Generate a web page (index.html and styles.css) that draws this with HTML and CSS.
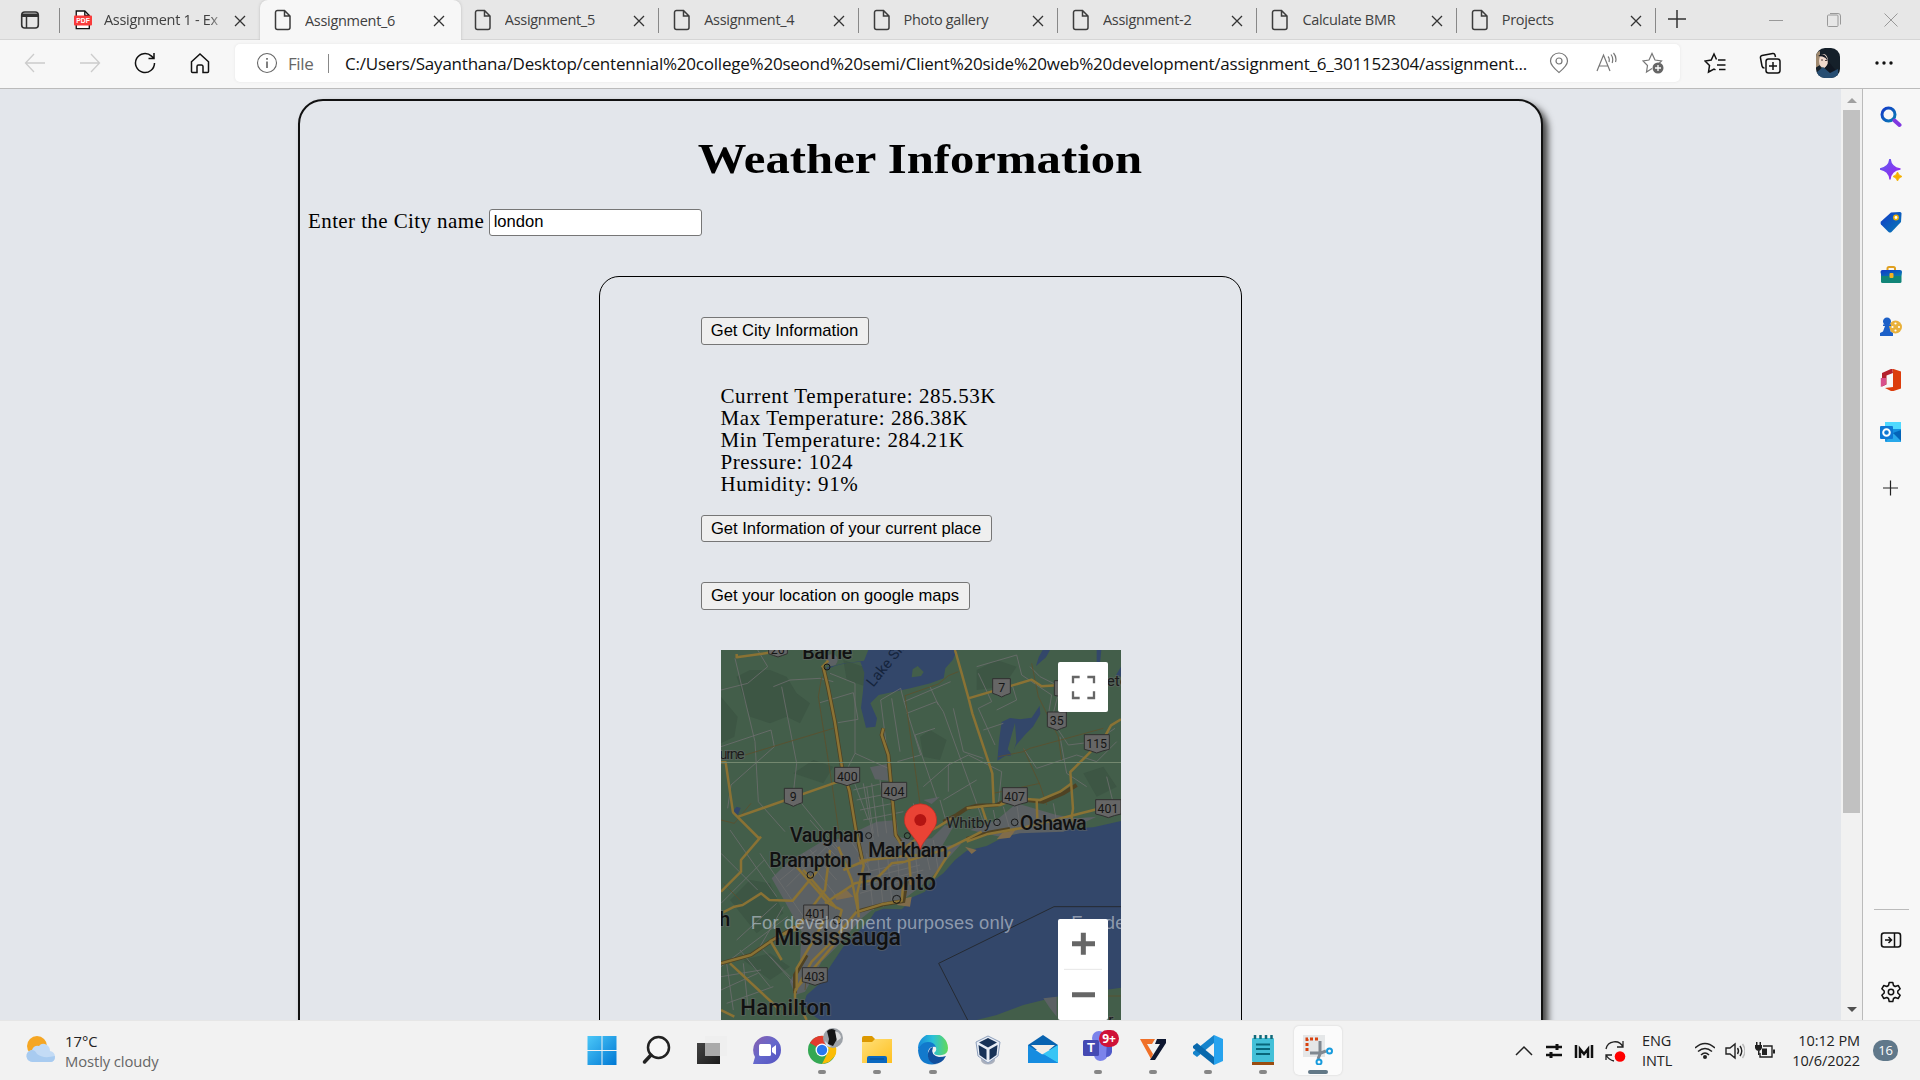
FILE: index.html
```html
<!DOCTYPE html>
<html lang="en">
<head>
<meta charset="utf-8">
<title>Assignment_6</title>
<link rel="stylesheet" href="styles.css">
</head>
<body>
<svg width="0" height="0" class="defs">
  <defs>
    <symbol id="doc" viewBox="0 0 18 22"><path d="M3.500 1.500H10.500L16 7V18.500a2 2 0 0 1-2 2H3.500a2 2 0 0 1-2-2V3.500a2 2 0 0 1 2-2zM10.500 1.500V7H16" fill="none" stroke="#3c3c3c" stroke-width="1.500"/></symbol>
    <symbol id="x" viewBox="0 0 12 12"><path d="M1 1l10 10M11 1L1 11" fill="none" stroke="#333" stroke-width="1.300"/></symbol>
    <linearGradient id="win" x2="1" y2="1"><stop stop-color="#4cc8f8"/><stop offset="1" stop-color="#0078d4"/></linearGradient>
    <linearGradient id="blu" x2="1" y2="1"><stop stop-color="#1238c8"/><stop offset="1" stop-color="#087eb4"/></linearGradient>
    <linearGradient id="pur" x2="1" y2="1"><stop stop-color="#5b5fef"/><stop offset="1" stop-color="#a020f0"/></linearGradient>
    <linearGradient id="edge" x2="1"><stop stop-color="#1689dc"/><stop offset=".5" stop-color="#2bc1d8"/><stop offset="1" stop-color="#62d957"/></linearGradient>
    <linearGradient id="fold" x2="1" y2="1"><stop stop-color="#ffe07a"/><stop offset="1" stop-color="#ffc020"/></linearGradient>
    <linearGradient id="chat" x2="1" y2="1"><stop stop-color="#8b5fae"/><stop offset=".5" stop-color="#6468cc"/><stop offset="1" stop-color="#5552c0"/></linearGradient>
    <linearGradient id="dark" x2="1" y2="1"><stop stop-color="#444"/><stop offset="1" stop-color="#1c1c1c"/></linearGradient>
  </defs>
</svg>

<header class="tabs">
  <div class="workspace"><svg width="20" height="20" viewBox="0 0 20 20"><rect x="1.700" y="2" width="16.600" height="16" rx="3" fill="none" stroke="#333" stroke-width="1.600"/><path d="M2 3.500h16V7H2z" fill="#333"/><path d="M6.500 6v12" stroke="#333" stroke-width="1.500"/></svg></div>
  <div class="tab before-active">
    <svg class="fav pdf" viewBox="0 0 20 22"><path d="M2.500 1h9.500l5 5v14.500H2.500z" fill="#fff" stroke="#111" stroke-width="1.500"/><path d="M12 1v5h5" fill="none" stroke="#111" stroke-width="1.500"/><rect y="6" width="20" height="11" rx="1" fill="#f93b3b"/><text x="10" y="14.500" text-anchor="middle" font-size="7.500" font-weight="bold" fill="#fff">PDF</text></svg>
    <span class="title fade">Assignment 1 - Ex</span><svg class="close"><use href="#x"/></svg></div>
  <div class="tab active"><svg class="fav"><use href="#doc"/></svg><span class="title">Assignment_6</span><svg class="close"><use href="#x"/></svg></div>
  <div class="tab"><svg class="fav"><use href="#doc"/></svg><span class="title">Assignment_5</span><svg class="close"><use href="#x"/></svg></div>
  <div class="tab"><svg class="fav"><use href="#doc"/></svg><span class="title">Assignment_4</span><svg class="close"><use href="#x"/></svg></div>
  <div class="tab"><svg class="fav"><use href="#doc"/></svg><span class="title">Photo gallery</span><svg class="close"><use href="#x"/></svg></div>
  <div class="tab"><svg class="fav"><use href="#doc"/></svg><span class="title">Assignment-2</span><svg class="close"><use href="#x"/></svg></div>
  <div class="tab"><svg class="fav"><use href="#doc"/></svg><span class="title">Calculate BMR</span><svg class="close"><use href="#x"/></svg></div>
  <div class="tab"><svg class="fav"><use href="#doc"/></svg><span class="title">Projects</span><svg class="close"><use href="#x"/></svg></div>
  <svg class="newtab" viewBox="0 0 18 18"><path d="M9 0v18M0 9h18" stroke="#333" stroke-width="1.500"/></svg>
  <div class="wincontrols">
    <svg viewBox="0 0 14 14"><path d="M0 7.500h14" stroke="#999"/></svg>
    <svg viewBox="0 0 14 14"><path d="M.5 3a1 1 0 0 1 1-1H10a1 1 0 0 1 1 1v9.500a1 1 0 0 1-1 1H1.500a1 1 0 0 1-1-1zM3 .5h8a2.500 2.500 0 0 1 2.500 2.500v8.500" fill="none" stroke="#999"/></svg>
    <svg viewBox="0 0 14 14"><path d="M.5.5l13 13M13.500.5l-13 13" stroke="#999"/></svg>
  </div>
</header>

<nav class="toolbar">
  <div class="navbtns">
    <svg viewBox="0 0 22 22"><path d="M21 11H2M10 2L1.500 11l8.500 9" fill="none" stroke="#ccc" stroke-width="1.300"/></svg>
    <svg viewBox="0 0 22 22"><path d="M1 11h19M12 2l8.500 9-8.500 9" fill="none" stroke="#ccc" stroke-width="1.300"/></svg>
    <svg viewBox="0 0 22 22"><path d="M20.500 11a9.500 9.500 0 1 1-3-6.900L20 6.500M20 1v5.500h-5.500" fill="none" stroke="#111" stroke-width="1.500"/></svg>
    <svg viewBox="0 0 22 22"><path d="M2.500 9.800L11 2l8.500 7.800v9.700a1 1 0 0 1-1 1H14v-6a1.500 1.500 0 0 0-1.500-1.500h-3A1.500 1.500 0 0 0 8 14.500v6H3.500a1 1 0 0 1-1-1z" fill="none" stroke="#111" stroke-width="1.500"/></svg>
  </div>
  <div class="address">
    <svg class="info" viewBox="0 0 22 22"><circle cx="11" cy="11" r="9.500" fill="none" stroke="#666" stroke-width="1.100"/><path d="M11 9.500V16M11 6v1.800" stroke="#555" stroke-width="1.500"/></svg>
    <span class="scheme">File</span><i class="bar"></i>
    <span class="url">C:/Users/Sayanthana/Desktop/centennial%20college%20seond%20semi/Client%20side%20web%20development/assignment_6_301152304/assignment...</span>
    <div class="addricons">
      <svg viewBox="0 0 22 22"><path d="M11 20.500C8 18 2.500 13.500 2.500 9a8.500 8 0 0 1 17 0c0 4.500-5.500 9-8.500 11.500z" fill="none" stroke="#777" stroke-width="1.200"/><circle cx="11" cy="9" r="3" fill="none" stroke="#777" stroke-width="1.200"/></svg>
      <svg viewBox="0 0 22 22"><path d="M2 19L8.500 3 15 19M4.200 14h8.600M13 4.500c1.500 1.500 1.500 3.500 1 5.500M16 2.500c2 2.500 2.200 5 1.200 8.500M18.500 1c2.500 3 3 6 2 9" fill="none" stroke="#777" stroke-width="1.200"/></svg>
      <svg viewBox="0 0 22 22"><path d="M10 16.500L4.500 20l1-6.500L1 9l6-1 3-6.500L13 8l6.500 1L17 11.500" fill="none" stroke="#777" stroke-width="1.200"/><circle cx="16" cy="16" r="5.500" fill="#666"/><path d="M16 13v6M13 16h6" stroke="#fff" stroke-width="1.300"/></svg>
    </div>
  </div>
  <div class="actions">
    <svg viewBox="0 0 22 22"><path d="M14 8h7.500M13 13h8.500M15 17.500h6.500M12.500 7.500L10 2 7.200 8 1 9l4.500 4.500-1 6.500 5.500-3 1.500.8" fill="none" stroke="#111" stroke-width="1.500"/></svg>
    <svg viewBox="0 0 22 22"><rect x="7" y="7" width="14" height="14" rx="2.500" fill="none" stroke="#111" stroke-width="1.500"/><path d="M14 10v8M10 14h8M16.500 5l-.5-2a2 2 0 0 0-2.300-1.500L3 3.500A2 2 0 0 0 1.500 6L3 14a2.500 2.500 0 0 0 2.500 2" fill="none" stroke="#111" stroke-width="1.500"/></svg>
    <svg class="avatar" viewBox="0 0 26 30"><clipPath id="av"><rect x="1" width="24" height="30" rx="9"/></clipPath><g clip-path="url(#av)"><rect width="26" height="30" fill="#15202a"/><path d="M0 5l5-2v14l-5 3z" fill="#a08a70"/><ellipse cx="8.500" cy="13" rx="4.500" ry="7" fill="#eed8cc"/><path d="M3 8q7-5 10 5l10 12-8 2-6-6 4-5q0-8-10-8z" fill="#101722"/><path d="M2 24l6-5 7 6 8-4v9H2z" fill="#264d72"/><path d="M6 12h2M10 12.500h2" stroke="#504040"/></g></svg>
    <svg viewBox="0 0 22 22"><g fill="#111"><circle cx="4" cy="11" r="1.700"/><circle cx="11" cy="11" r="1.700"/><circle cx="18" cy="11" r="1.700"/></g></svg>
  </div>
</nav>

<div class="middle">
  <main class="viewport">
    <section class="card">
      <h1>Weather Information</h1>
      <div class="field"><label for="city">Enter the City name</label><input id="city" value="london"></div>
      <div class="panel">
        <button class="b1">Get City Information</button>
        <div class="results">Current Temperature: 285.53K<br>Max Temperature: 286.38K<br>Min Temperature: 284.21K<br>Pressure: 1024<br>Humidity: 91%</div>
        <button class="b2">Get Information of your current place</button>
        <button class="b3">Get your location on google maps</button>
        <svg class="map" viewBox="33 30 1200 1110">
          <rect x="33" y="30" width="1200" height="1110" fill="#435e4a"/>
          <g fill="#3d5644">
            <path d="M80 110l40-20 60 0 50 20 30 50 40 30-30 60-40-20-50 20-60-20-20-60z"/><path d="M33 170l50 60-10 60-40 20zM400 60l60 20 10 60-60-20zM630 290l30-20 50 30-20 60-50-10z"/><path d="M800 90l60-30 60 20-40 60-80 10zM250 400l60-40 60 20-30 50z"/><path d="M60 780l60-60 60 10 40 90-80 60zM100 960l80-20 60 40-60 40zM1120 400l60-20 40 60-60 30z"/>
          </g>
          <g fill="#33476a">
            <path d="M352 82l50-12 60-8L475 30H742L728 60l-22 25-5 30-40 15-60 15-95 20-25 25 20 45-5 25-28 3-15-60 6-50 4-55-12-33-40 4-35 8-28 12z"/>
            <path d="M875 246l25-12 30 4 35-5 24-36 2 25-22 38-22 22-30 35-15 30h-15l-25 15 5-60z"/>
            <path d="M1020 30l-12 22-30 26 8-26 12-22zM1160 30h14l-4 40-10 25zM80 500l12 4-8 20-20-5zM1218 105l15-25v30z"/>
            <path d="M1233 543L1150 562 1060 568 940 576 880 592 830 618 770 632 735 660 700 700 660 730 645 755 600 775 595 790 575 808 520 806 495 815 480 838 450 870 400 920 360 980 330 1030 290 1065 280 1095 300 1120 330 1140H800L860 1125 940 1095 1040 1070 1233 1043Z"/>
          </g>
          <path d="M608 88l15-10 18 18-8 12-28 4zM915 248l-22 80 14 18 12-40z" fill="#435e4a"/>
          <g fill="#5c6164">
            <path d="M480 382l50-10 5 50-40-4zM500 545l60-5 5 50 40 10 60-5 40-40 25 5-35 60 60-10-90 100-40 35-40 30-30 10-50 10-50 40-60 70-60 60-50 90-30 10-15-40 30-60 5-90-50-90-40-70 50-50 100-60 60-10z"/><path d="M780 570l80-30 60-50 120 35 60 10 60-5-100 45-130 5-60 10zM640 480l50-10-25 22zM1000 1075l40-5v60l-20-25z"/><circle cx="365" cy="60" r="18"/>
          </g>
          <path d="M880 575l40-10-20 28-40 5zM765 620l35 10-15 12zM445 650l35 15-30 10zM560 795l25-20 20-5-5 30zM370 765l40-15 20 20-50 10z" fill="#806c4b"/>
          <g fill="none" stroke="#6c6e6e" stroke-width="2.500">
            <path d="M75 55l60 250 10 180 80 90M33 150l80-20 60-50-30-50M33 320l150-50 10 50-130 115-10 70M190 140l50-20 90-5 40 10M215 140l45 230-10 90 90 110 80 100M330 188l100-30 14 80-60 10M360 100l75 30 0 210-20 40 60 160M435 340l100 45M512 180l20 160M512 180l60-35 10 40 50 160-70 20M545 175l25 160M582 185l140-60M590 220l90-35 20 30 120 330M660 140l25 55M730 205l30 130 60 20M615 285l60-20M615 285l65 190M715 375l60-30 100 50-10 100M715 375v80M860 210l60-30-12-40M820 270l60-20M800 80l120-35 15 60 90 60-10 60 60 90 80-10 60-40M805 100l40 85-40 20 50 110M940 325l40 60 120-40 60 20 60-60M1050 290l20 110 60 40M960 80l30 30 60 30-20 80M1190 410l20 80 23-5M700 480l100-60M640 440l80-70"/>
            <path d="M430 450l90-20M440 480l100-20M450 510l100-20M460 540l120-25M470 440l20 140M485 430l20 160M460 430l30 170M510 420l20 160M610 490l20 80M640 500l20 70M690 480l20 70M33 640l110 110M60 570l140 200M33 790l130-130M80 900l120-110M33 980l200-150M150 640l130 190M180 950l80 90M90 930l90 110M33 1010l120-20M50 1090l140-50M50 970l20 140M100 970l15 140M33 1050l110-50M220 800l-70 120 90 90M300 540l80 90M400 570l80 120M330 600l60 60M1110 1060v80M1050 1070l40 60"/>
            <path d="M450 700l130-30M450 720l180-45M450 740l190-50M450 760l190-55M470 640l20 170M500 620l20 180M530 620l15 160M560 620l10 130M610 600l20 150M640 600l20 90M670 600l15 90M260 660l90 120M280 640l100 130M300 630l80 90M210 720l110-90M230 740l120-120M820 520l10 50M850 510l10 50M880 500l20 70M920 490l10 70M1030 490l10 55"/>
          </g>
          <g fill="none" stroke="#5d4f2c" stroke-width="2.500"><path d="M105 345l265-80M335 110l-10 60 45 290 20 140M745 95l-30 12-30 25-100 35 8 60 30 215 10 70M865 350l75-15 20-10 220-60M965 70l20 100 60 120 10 70M940 325l50 110 20 60M850 460l140-30M33 540l40 10 50-60M40 730l65 65M290 1000l-5 50M1130 1068h103"/></g>
          <g fill="none" stroke="#4f4223" stroke-width="12">
            <path d="M340 82l14 60 20 100 22 140 22 70 20 120 18 85M520 265l-5 20 20 60 22 240 15 20"/><path d="M33 970l90-25 65-45 70-40M700 545l40-20 30-20 30-8 60-2 40-20 100 10 60-25 40-25M770 597l70-20 60-10M440 815l80-22 60-10 10-60M255 1060v-55l35-60"/>
          </g>
          <g fill="none" stroke="#8a7234" stroke-width="7.500" stroke-linejoin="round">
            <path d="M340 82l14 60 20 100 22 140 22 70 20 120 23 105 -20 85 5 70M335 82l20-20M520 265l-5 20 20 60 22 240 40 70 6 80M80 42v10l105-15M735 30l20 70 22 80 10 40 60 180 4 90M775 175l130-38 60-18 30 20 70-5M1233 238l-30 18-22 40-80 80 -20 20 8 110-6 40M33 367h14l22 150 80 80M85 530l300-105M33 970l90-25 65-45 70-40M33 755l60-60 0-35 60-70M33 820l40-20 25-5 55-35 25 20 70 2 70-85 20-30M60 970l150 140M33 1110l40 20M180 900l35 60"/>
            <path d="M870 495l50-20 70 5 60-25 35-25M770 505l60-8 40-2 20-15M815 500l15 45M980 480l2 60M770 605l60-22 110-20 120-30 100-25M575 630l60-45 50-25 40-25M400 690l70-30 150-15M345 790l90-60 60-10 50-50 40-5 50-15 80-25 60-30 40-20M255 675l70 80 30 35 40 20-10 40M280 690l100 115M360 630l-15 120-90 120-50 20M385 620l40 100 20 95 70-22 60-10 5-50M440 815l-75 90-60 60-50 90v65M350 820l-30 65-60 100 0 65M255 1050l120-140M670 715l50-80M290 1140l-10-20"/>
          </g>
          <path d="M1233 800H1032L686 970 773 1140" fill="none" stroke="#252a32" stroke-width="3"/>
          <path d="M33 367.500H1233" stroke="#73886f" stroke-width="3"/>
          <g fill="none" stroke="#181818" stroke-width="3"><circle cx="351" cy="81" r="9"/><circle cx="476" cy="587" r="9"/><circle cx="592" cy="587" r="9"/><circle cx="861" cy="547" r="10"/><circle cx="914" cy="547" r="10"/><circle cx="301" cy="705" r="10"/><circle cx="560" cy="778" r="12"/><circle cx="382" cy="841" r="12"/></g>
          <g fill="#666" stroke="#303030" stroke-width="3">
            <path d="M176 18h56v23q-16 6-28 10-12-4-28-10zM848 116h53v44q-15 5-26 11-11-6-27-11zM1033 122h40v44q-20 8-40 0zM1012 216h57v44q-15 5-28 11-13-6-29-11zM1123 284h75v44q-20 4-38 11-18-7-37-11zM374 382h75v44q-20 4-38 11-18-7-37-11zM515 427h75v44q-20 4-38 11-18-7-37-11zM877 443h75v44q-20 4-38 11-18-7-37-11zM1157 479h76v43q-20 4-38 11-18-7-38-11zM223 445h54v43q-15 5-27 11-11-6-27-11zM281 795h74v42q-18 4-36 11-18-7-38-11zM277 983h75v42q-19 4-37 11-18-7-38-11z"/>
          </g>
          <g class="shield"><text x="203" y="42">26</text><text x="875" y="156">7</text><text x="1040" y="256">35</text><text x="1160" y="324">115</text><text x="412" y="422">400</text><text x="552" y="467">404</text><text x="914" y="483">407</text><text x="1194" y="519">401</text><text x="250" y="484">9</text><text x="317" y="833">401</text><text x="314" y="1022">403</text></g>
          <g class="place"><text x="277" y="56" textLength="150">Barrie</text><text x="240" y="606" textLength="222">Vaughan</text><text x="475" y="650" textLength="238">Markham</text><text x="178" y="681" textLength="247">Brampton</text><text x="930" y="569" textLength="200">Oshawa</text><text class="lg" x="442" y="750" textLength="236">Toronto</text><text class="lg" x="193" y="915" textLength="380">Mississauga</text><text class="md" x="91" y="1125" textLength="273">Hamilton</text><text x="28" y="857">h</text></g>
          <g class="small"><text x="708" y="564" textLength="136">Whitby</text><text x="28" y="357" textLength="76">urne</text><text x="1190" y="138">ete</text><text x="1195" y="1155">r</text><text class="lake" transform="translate(490 143) rotate(-51)">Lake Sim</text></g>
          <g class="dev"><text x="122" y="867" textLength="788">For development purposes only</text><text x="1084" y="867" textLength="788">For development purposes only</text></g>
          <path d="M631 629c-5-22-18-32-31-51-9-13-17-21-17-38a48 48 0 0 1 97 0c0 17-8 25-17 38-13 19-26 29-32 51z" fill="#ea4335" stroke="#b92c22" stroke-width="2"/><circle cx="631" cy="540" r="18" fill="#b31412"/>
          <rect x="1044" y="66" width="150" height="150" rx="6" fill="#fff"/>
          <path d="M1089 130v-19h20M1132 111h20v19M1152 154v20h-20M1109 174h-20v-20" fill="none" stroke="#666" stroke-width="7"/>
          <rect x="1044" y="837" width="150" height="303" rx="6" fill="#fff"/>
          <path d="M1086 911h69M1120 878v66M1086 1064h69" stroke="#666" stroke-width="15"/><path d="M1062 988h114" stroke="#e6e6e6" stroke-width="3"/>
        </svg>
      </div>
    </section>
  </main>
  <div class="scroll"><i class="up"></i><div class="thumb"></div><i class="down"></i></div>
  <aside class="side">
    <svg viewBox="0 0 22 22"><circle cx="8.500" cy="8.500" r="6.500" fill="none" stroke="url(#blu)" stroke-width="3"/><path d="M14.500 14.500l5 4.500" stroke="#8038e0" stroke-width="4" stroke-linecap="round"/></svg>
    <svg viewBox="0 0 22 22"><path d="M10 0q1 8.500 10 10-9 1.500-10 10Q9 11.500 0 10 9 8.500 10 0z" fill="url(#pur)" stroke="url(#pur)" stroke-width="1.500" stroke-linejoin="round"/><path d="M17.500 13q1 3.500 4.500 4.500-3.500 1-4.500 4.500-1-3.500-4.500-4.500 3.500-1 4.500-4.500z" fill="#f5b000" stroke="#f5b000" stroke-width=".8"/></svg>
    <svg viewBox="0 0 22 22"><path d="M11 1.500L20 1q1.500 0 1.500 1.500L21 11 11.500 21q-1.500 1-3 0L1 13.500q-1-1.500 0-3z" fill="url(#blu)"/><circle cx="16" cy="6.500" r="2.200" fill="#fff" stroke="#f0b000" stroke-width="1.500"/></svg>
    <svg viewBox="0 0 22 22"><path d="M7.500 7V4.500q0-1.500 1.500-1.500h4.500Q15 3 15 4.500V7" fill="none" stroke="#e0a020" stroke-width="2"/><rect x="1" y="7" width="20.500" height="12" rx="1.500" fill="#118578"/><path d="M.5 8q0-2 2-2H20q2 0 2 2l-1 4H1.500z" fill="url(#blu)"/><rect x="9.500" y="9" width="4" height="5" rx="1" fill="#f4b322"/></svg>
    <svg viewBox="0 0 22 22"><circle cx="15.500" cy="11" r="6.500" fill="#e9b13b"/><g fill="#fff"><circle cx="15.500" cy="7.500" r="1.100"/><circle cx="15.500" cy="14.500" r="1.100"/><circle cx="12.500" cy="11" r="1.100"/><circle cx="19" cy="11" r="1.100"/></g><path d="M0 20v-3l3-1.500L5 10H3V8.500h1.500a4 4 0 1 1 5 0H11V10H9l1.500 5.500L13 17v3z" fill="#1c60c8"/></svg>
    <svg viewBox="0 0 22 22"><path d="M12 -.5L21 2.500v17L12 22.500 5 19l8-1V4z" fill="#dc3d0c"/><path d="M12 -.5L2 4v13.500l4.500-2V6.500L13 4z" fill="#b3202c"/><path d="M.8 9v9l5.200-2.500V9z" fill="#d8508c"/></svg>
    <svg viewBox="0 0 22 22"><rect x="5" y="1" width="16" height="20" rx="1" fill="#1490df"/><path d="M5 1h16v7H5z" fill="#50d9ff"/><path d="M10 15l11-6v12H6z" fill="#28a8ea"/><path d="M13 12l8 8V9z" fill="#0364b8"/><rect y="5" width="13" height="13" rx="1" fill="#0f78d4"/><circle cx="6.500" cy="11.500" r="3.300" fill="none" stroke="#fff" stroke-width="2"/></svg>
    <svg class="add" viewBox="0 0 22 22"><path d="M10.500 3.500v15M3 11h15" stroke="#222" stroke-width="1.200"/></svg>
    <hr>
    <svg viewBox="0 0 22 22"><rect x="1.500" y="4" width="19" height="14" rx="2.500" fill="none" stroke="#111" stroke-width="1.600"/><path d="M14.500 4v14M5 11h6M8.500 8l3 3-3 3" fill="none" stroke="#111" stroke-width="1.500"/></svg>
    <svg viewBox="0 0 22 22"><path d="M9.200 1.500h3.600l.7 3 1.700 1 3-1 2 3.300-2.400 2.200v2l2.400 2.200-2 3.300-3-1-1.700 1-.7 3H9.200l-.7-3-1.700-1-3 1-2-3.300L4.200 12v-2L1.800 7.800l2-3.300 3 1 1.700-1z" fill="none" stroke="#111" stroke-width="1.500" stroke-linejoin="round"/><circle cx="11" cy="11" r="2.700" fill="none" stroke="#111" stroke-width="1.500"/></svg>
  </aside>
</div>

<footer class="taskbar">
  <div class="weather">
    <svg width="32" height="30" viewBox="0 0 32 30"><circle cx="12" cy="11" r="10" fill="#f5a623"/><path d="M8 27a6 6 0 0 1-1-12q2-5 7-4 3-4 8-1 3 2 3 6 5 1 5 6 0 5-5 5z" fill="#c3dbf5"/><path d="M8 27a6 6 0 0 1-1-12q3 0 5 4 6 5 18 2 0 6-5 6z" fill="#a8cbf0"/></svg>
    <div><div>17°C</div><div class="dim">Mostly cloudy</div></div>
  </div>
  <div class="apps">
    <span><svg viewBox="0 0 30 30"><path d="M.5 1h14v14H.5zM15.500 1h14v14h-14zM.5 16h14v14H.5zM15.500 16h14v14h-14z" fill="url(#win)"/></svg></span>
    <span><svg viewBox="0 0 30 30"><circle cx="16.500" cy="12.500" r="10.500" fill="#fff" fill-opacity=".4" stroke="#222" stroke-width="2.500"/><path d="M9 20l-6.500 7" stroke="#222" stroke-width="3.500" stroke-linecap="round"/></svg></span>
    <span><svg viewBox="0 0 30 30"><path d="M0 8h23v21H0z" fill="url(#dark)"/><path d="M8 1h22v20H8z" fill="#eee" opacity=".85"/><path d="M8 8h15v13H8z" fill="#aaa"/></svg></span>
    <span><svg viewBox="0 0 30 30"><path d="M15 1a14 14 0 0 1 0 28H1l2-7A14 14 0 0 1 15 1z" fill="url(#chat)"/><rect x="7" y="9" width="12" height="12" rx="1.500" fill="#fff"/><path d="M20 13l4-3v10l-4-3z" fill="#fff"/></svg></span>
    <span class="run"><svg class="wide" viewBox="0 0 38 38"><g transform="translate(4 8)"><circle cx="15" cy="15" r="14" fill="#34a853"/><path d="M15 15L3 8a14 14 0 0 1 24-1z" fill="#e33b2e"/><path d="M15 1a14 14 0 0 1 13 20l-6 6-7 2 7-14z" fill="#fbbc05"/><path d="M3 8a14 14 0 0 1 24 0H15z" fill="#e33b2e"/><circle cx="15" cy="15" r="6.500" fill="#fff"/><circle cx="15" cy="15" r="5.200" fill="#2878ef"/></g><circle cx="30" cy="11" r="10" fill="#9da2a8"/><path d="M24 4q5-4 9 0l1 8-4 7-5-2 1-5z" fill="#151515"/><path d="M32 4q6 2 6 7l-4 3z" fill="#ddd"/><path d="M22 14l6 6-5-1z" fill="#cfe0ef"/></svg></span>
    <span class="run"><svg viewBox="0 0 30 30"><path d="M0 3q0-2 2-2h8l3 3v6H0z" fill="#dc9800"/><path d="M0 7h10l3-3h17v24H0z" fill="url(#fold)"/><path d="M5 28v-5q0-2 2-2h16q2 0 2 2v5z" fill="#0a68c0"/><path d="M8 24h14" stroke="#084a8c"/></svg></span>
    <span class="run"><svg viewBox="0 0 30 30"><path d="M0 14A15 15 0 0 1 30 13q0 6-6 7-7 1-8-2 4-3 1-7-5-5-17 3z" fill="url(#edge)"/><path d="M0 15q3-8 10-8 6 0 8 5-7-1-8 5-1 9 9 12Q1 32 0 15z" fill="#1279cc"/><path d="M10 18q2-6 5-6-3 8 6 10 4 0 7-1-4 8-12 8-7-3-6-11z" fill="#104f9e"/></svg></span>
    <span><svg viewBox="0 0 30 30"><ellipse cx="15" cy="25" rx="7" ry="4.500" fill="#aab0bd"/><path d="M15 1l12 6-2 14-10 7L5 21 3 7z" fill="#e8edf5" stroke="#8ea0bd"/><path d="M15 3l9 4.500-9 5-9-5zM5.500 10l8 4.500V25l-7-5zM24.500 10l-8 4.500V25l7-5z" fill="#173257"/></svg></span>
    <span><svg viewBox="0 0 30 30"><path d="M0 10L15 0l15 10v5H0z" fill="#0863b0"/><path d="M3 10h24L15 20z" fill="#f2eee8"/><path d="M0 10l15 10L30 10v18H0z" fill="#168ce0"/><path d="M15 19l15-9v18z" fill="#38c5f5"/><path d="M0 28l15-9 15 9z" fill="#168ce0"/></svg></span>
    <span class="run"><svg class="wide" viewBox="0 0 38 38"><circle cx="20" cy="11" r="7" fill="#7b83eb"/><path d="M15 14h14v13q-1 7-8 7-6-1-6-7z" fill="#7b83eb"/><path d="M28 14h5v11q-1 5-6 5z" fill="#5059c9"/><rect x="4" y="13" width="16" height="16" rx="1.500" fill="#454ab3"/><text x="12" y="25" class="t">T</text><rect x="20" y="3" width="20" height="17" rx="8.500" fill="#cf1238"/><text x="30" y="15.500" class="badge9">9+</text></svg></span>
    <span class="run"><svg viewBox="0 0 30 30"><path d="M2 4h15l-3 5H9l6 10-2 5z" fill="#f07028"/><path d="M19 4h9v4L17 25h-5l10-16h-5z" fill="#0e1730"/></svg></span>
    <span class="run"><svg viewBox="0 0 30 30"><path d="M21 0v8L4 22l-4-3v-2z" fill="#1684cc"/><path d="M21 30v-8L4 8 0 11v2z" fill="#0969ad"/><path d="M21 0l9 4v22l-9 4z" fill="#27a3ee"/></svg></span>
    <span class="run"><svg viewBox="0 0 30 30"><rect x="4" y="3" width="22" height="24" rx="1" fill="#43c0d8"/><path d="M4 27h22v3H4z" fill="#9a4c10"/><path d="M8 9.500h14M8 14h14M8 19h14" stroke="#08667a" stroke-width="2"/><path d="M7 0v4M12.500 0v4M18 0v4M23.500 0v4" stroke="#126a7a" stroke-width="2.500"/></svg></span>
    <span class="run selected"><svg viewBox="0 0 30 30"><rect x="0" y="0" width="22" height="22" fill="#e5e7e8"/><path d="M4 16V4h12" fill="none" stroke="#d9420f" stroke-width="3" stroke-dasharray="3 2"/><path d="M17 6v13l-2 5M7 18h11l5-2" fill="none" stroke="#808890" stroke-width="3"/><circle cx="26.500" cy="16" r="2.500" fill="none" stroke="#189bdc" stroke-width="2"/><circle cx="16" cy="27" r="2.500" fill="none" stroke="#189bdc" stroke-width="2"/></svg></span>
  </div>
  <div class="tray">
    <svg viewBox="0 0 20 20"><path d="M2 14l8-8 8 8" fill="none" stroke="#222" stroke-width="1.500"/></svg>
    <svg viewBox="0 0 20 20"><path d="M2 6h16M2 14h16" stroke="#111" stroke-width="2.600"/><path d="M13 3v6M7 11v6" stroke="#111" stroke-width="3"/></svg>
    <svg viewBox="0 0 20 20"><path d="M2 4v13M18 4v13M6 17V8l4 5 4-5v9" fill="none" stroke="#111" stroke-width="2.500"/></svg>
    <svg class="sync" viewBox="0 0 22 22"><path d="M2 9a9 9 0 0 1 17-2M19 1v6h-6M2 20v-5h6M2 15q3 5 8 6" fill="none" stroke="#222" stroke-width="1.300"/><circle cx="16" cy="16.500" r="5.300" fill="#f00"/></svg>
    <div class="lang">ENG<br>INTL</div>
    <svg viewBox="0 0 20 20"><path d="M0 7q10-9 20 0M3 10.500q7-6 14 0M6 14q4-4 8 0" fill="none" stroke="#222" stroke-width="1.500"/><circle cx="10" cy="16" r="2" fill="#222"/></svg>
    <svg viewBox="0 0 20 20"><path d="M1 7h4l5-4v14l-5-4H1zM12.500 7q2 3 0 6M15 5q3.500 5 0 10" fill="none" stroke="#222" stroke-width="1.400"/><path d="M17.500 3q5 7 0 14" fill="none" stroke="#bbb" stroke-width="1.400"/></svg>
    <svg viewBox="0 0 20 20"><path d="M8 5h9v11H5v-4" fill="none" stroke="#222" stroke-width="1.400"/><path d="M7 7.500h5V14H7zM18 8.500h2v4h-2zM0 4h7v3q-1 3-3 3-3 0-4-3zM1 1h1.500v3H1zM4.500 1H6v3H4.500zM3 9h1.500v5H3z" fill="#222"/></svg>
    <div class="clock">10:12 PM<br>10/6/2022</div>
    <b class="count">16</b>
  </div>
</footer>
</body>
</html>
```
FILE: styles.css
```css
* { box-sizing: border-box; }
html, body { margin: 0; height: 100%; overflow: hidden; }
body { display: flex; flex-direction: column; width: 1920px; height: 1080px; font-family: "Segoe UI", "Open Sans", "Noto Sans", sans-serif; color: #222; background: #f7f7f7; }
svg { display: block; flex: none; }
.defs { position: absolute; }

.tabs { display: flex; height: 40px; background: #e7e7e7; border-bottom: 1px solid #d5d5d5; }
.workspace { width: 60px; padding: 10px 0 0 20px; background: linear-gradient(#888, #888) right 8px / 1px 25px no-repeat; }
.tab { display: flex; flex: none; align-items: center; width: 199.4px; height: 39px; padding: 0 14px 0 13px; background: linear-gradient(#888, #888) right 8px / 1px 25px no-repeat; }
.tab.before-active { width: 200px; background: none; }
.tab.active { width: 201px; height: 40px; margin-right: -1.200px; padding-right: 16px; background: #f7f7f7; border-radius: 8px 8px 0 0; box-shadow: 0 0 3px #bbb; clip-path: inset(0 -4px 0 -4px); }
.fav { width: 18px; height: 22px; margin-left: 1px; }
.tab .title { flex: 1; margin-left: 13px; font-size: 14.5px; letter-spacing: -.3px; color: #404040; white-space: nowrap; overflow: hidden; }
.tab .fade { margin-left: 12px; -webkit-mask-image: linear-gradient(90deg, #000 80%, transparent 95%); mask-image: linear-gradient(90deg, #000 80%, transparent 95%); }
.close { width: 12px; height: 12px; margin-top: 2px; }
.newtab { width: 18px; height: 18px; margin: 10px 0 0 12px; }
.wincontrols { display: flex; gap: 43.500px; margin: 13px 22px 0 auto; }
.wincontrols svg { width: 14px; height: 14px; }

.toolbar { display: flex; align-items: center; height: 49px; padding-bottom: 2px; background: #f7f7f7; border-bottom: 1px solid #bbb; }
.navbtns { display: flex; gap: 33px; width: 235px; padding-left: 24px; }
.navbtns svg, .addricons svg, .actions svg { width: 22px; height: 22px; }
.address { display: flex; align-items: center; width: 1445px; height: 38px; padding: 0 16px 0 21px; background: #fff; border-radius: 5px; box-shadow: 0 0 3px #e4e4e4; }
.info { width: 22px; height: 22px; }
.scheme { width: 40px; padding-left: 10px; font-size: 17px; letter-spacing: -.4px; color: #666; }
.bar { width: 1px; height: 19px; margin: 0 16px 0 10px; background: #888; }
.url { width: 1203px; font-size: 17px; letter-spacing: -.22px; color: #111; white-space: nowrap; }
.addricons { display: flex; gap: 25px; }
.actions { display: flex; align-items: center; gap: 33px; margin-left: 24px; }
.actions .avatar { width: 26px; height: 30px; margin: 0 -1px 0 1px; }

.middle { display: flex; height: 931px; overflow: hidden; }
.viewport { width: 1841px; padding-top: 10px; background: #e3e6eb; }
.card { width: 1245px; height: 1100px; margin-left: 298px; padding: 1px 9px 0 8px; border: 2px solid #111; border-radius: 25px; box-shadow: 5px 5px 7px #444; background: #e3e6eb; font-family: Georgia, "Liberation Serif", serif; color: #000; }
h1 { height: 46px; margin: 34px 0 0; text-align: center; font-size: 43px; line-height: 46px; transform: scaleX(1.133); }
.field { display: flex; align-items: center; height: 28px; margin-top: 26px; font-size: 21px; letter-spacing: .4px; }
label { padding-bottom: 2px; }
input { width: 213px; height: 27px; margin: 0 0 0 4.500px; padding: 1px 4px; border: 1px solid #767676; border-radius: 3px; background: #fff; color: #000; font: 16.600px "Liberation Sans", Arial, sans-serif; }
.panel { width: 643px; height: 900px; margin: 40px auto 0; padding: 40px 0 0 101px; border: 1px solid #000; border-radius: 20px; }
button { display: block; padding: 0; border: 1px solid #767676; border-radius: 3px; background: #efefef; color: #000; font: 16.600px "Liberation Sans", Arial, sans-serif; text-align: center; white-space: nowrap; }
.b1 { width: 168px; height: 28px; }
.b2 { width: 291px; height: 27px; margin-top: 20px; }
.b3 { width: 269px; height: 28px; margin-top: 40px; }
.results { height: 110px; margin: 40px 0 0 20px; font-size: 21px; line-height: 22px; letter-spacing: .6px; white-space: nowrap; }
.map { width: 400px; height: 370px; margin: 40px 0 0 20px; font-family: Roboto, sans-serif; }
.shield text { font-size: 37px; text-anchor: middle; fill: #161616; }
.place text, .small text { fill: #111; stroke: #63676788; stroke-width: 6px; paint-order: stroke; }
.place text { font-size: 59px; font-weight: 500; }
.place .md { font-size: 66px; }
.place .lg { font-size: 69px; }
.small text { font-size: 46px; fill: #1c1c1c; }
.small .lake { font-size: 44px; fill: #15243c; stroke: none; }
.dev text { font: 55px "Liberation Sans", Arial, sans-serif; fill: #c2cad5; fill-opacity: .65; }
.pdf text { font-family: "Liberation Sans", sans-serif; }

.scroll { display: flex; flex-direction: column; align-items: center; width: 22px; background: #f1f1f1; border-right: 1px solid #bbb; }
.up { margin-top: 9px; border: 5px solid transparent; border-top: 0; border-bottom-color: #a0a0a0; }
.thumb { width: 17px; height: 703px; margin-top: 7px; background: #c1c1c1; }
.down { margin: auto 0 8px; border: 5px solid transparent; border-bottom: 0; border-top-color: #505050; }
.side { display: flex; flex-direction: column; align-items: center; width: 57px; padding: 17px 1px 0 0; gap: 30.500px; background: #f7f7f7; }
.side svg { width: 22px; height: 22px; }
.side .add { margin-top: 3px; }
.side hr { width: 35px; height: 1px; margin: auto 0 -12px; border: 0; background: #bbb; }
.side svg:last-child { margin-bottom: 17px; }

.taskbar { display: flex; height: 60px; background: #f2f2f2; border-top: 1px solid #e6e6e6; }
.weather { display: flex; width: 575px; padding: 10px 0 0 25px; gap: 8px; font-size: 14.800px; line-height: 20px; }
.weather svg { margin-top: 4px; }
.dim { color: #666; letter-spacing: -.1px; }
.apps { display: flex; margin-left: -.5px; }
.apps span { display: flex; flex-direction: column; align-items: center; width: 55.080px; height: 59px; padding-top: 14px; }
.apps svg { width: 30px; height: 30px; }
.apps .wide { width: 38px; height: 38px; margin-top: -8px; overflow: visible; }
.run::after { content: ""; width: 8px; height: 4px; margin-top: 5px; border-radius: 2px; background: #868686; }
.apps .selected { width: 48px; height: 49px; margin: 5px 0 0 3px; padding-top: 9px; border-radius: 5px; background: #fbfbfb; box-shadow: 0 0 2px #ccc; }
.selected::after { width: 20px; background: #627887; }
.t { font: bold 13px "Liberation Sans", sans-serif; text-anchor: middle; fill: #fff; }
.badge9 { font: bold 12px "Open Sans", sans-serif; text-anchor: middle; fill: #fff; }
.tray { display: flex; align-items: center; margin-left: auto; padding-right: 22px; gap: 10px; font-size: 14.500px; line-height: 20px; letter-spacing: -.1px; }
.tray svg { width: 20px; height: 20px; }
.tray .sync { width: 22px; height: 22px; }
.lang { width: 31px; margin: 0 12px 0 6px; }
.clock { width: 75px; margin-right: 3px; text-align: right; }
.count { width: 25px; height: 21px; border-radius: 10px; background: #60788a; color: #fff; font-size: 13px; font-weight: 400; text-align: center; }
```
